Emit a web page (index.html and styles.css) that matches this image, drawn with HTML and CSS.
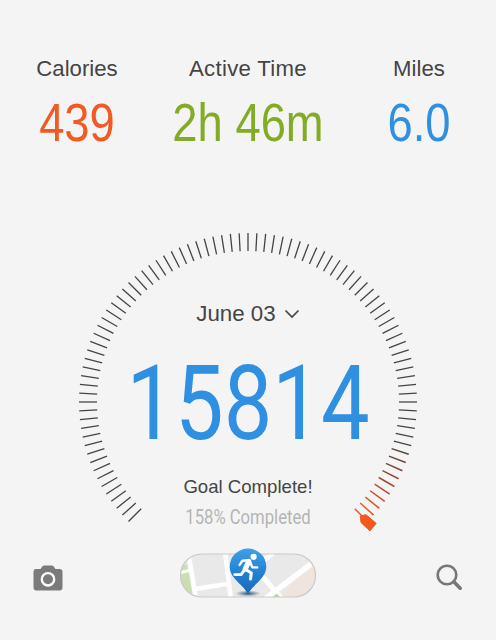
FILE: index.html
```
<!DOCTYPE html>
<html lang="en">
<head>
<meta charset="UTF-8">
<meta name="viewport" content="width=device-width, initial-scale=1.0">
<title>Activity</title>
<link rel="stylesheet" href="styles.css">
</head>
<body>

<div class="stats">
    <div class="stat">
        <div class="stat-label">Calories</div>
        <div class="stat-value orange">439</div>
    </div>
    <div class="stat">
        <div class="stat-label wide">Active Time</div>
        <div class="stat-value green">2h 46m</div>
    </div>
    <div class="stat">
        <div class="stat-label">Miles</div>
        <div class="stat-value blue">6.0</div>
    </div>
</div>

<div class="dial">
    <svg class="dial-ring" viewBox="0 0 350 310" width="350" height="310">
        <g id="ticks"></g>
        <path d="M287.3 293 L293 291.7 L303.2 300.3 L297 307.9 L288 299.6 Z" fill="#f4581f" stroke="#f4581f" stroke-linejoin="round"/>
    </svg>
    <div class="dial-content">
        <div class="date">
            <span>June 03</span>
            <svg width="16" height="10" viewBox="0 0 16 10"><path d="M1.5 1.5 L8 8 L14.5 1.5" fill="none" stroke="#444" stroke-width="1.7"/></svg>
        </div>
        <div class="steps">15814</div>
        <div class="goal">Goal Complete!</div>
        <div class="percent">158% Completed</div>
    </div>
</div>

<div class="toolbar">
    <svg class="camera" width="30" height="26" viewBox="0 0 30 26">
        <path d="M3 4 H7.5 L9.5 1.2 Q10 .5 11 .5 H19 Q20 .5 20.5 1.2 L22.5 4 H26.5 Q29.5 4 29.5 7 V22.5 Q29.5 25.5 26.5 25.5 H3.5 Q.5 25.5 .5 22.5 V7 Q.5 4 3 4 Z" fill="#7b7b7b"/>
        <circle cx="15" cy="14.3" r="6.2" fill="none" stroke="#fff" stroke-width="2.4"/>
    </svg>

    <svg class="map" width="138" height="56" viewBox="0 0 138 56">
        <defs>
            <clipPath id="pill"><rect x="1.5" y="11" width="135" height="43" rx="21.5"/></clipPath>
            <linearGradient id="pinFill" x1="0" y1="0" x2="0" y2="1">
                <stop offset="0" stop-color="#3fa0e8"/>
                <stop offset=".45" stop-color="#2886d8"/>
                <stop offset="1" stop-color="#1769b8"/>
            </linearGradient>
            <radialGradient id="pinShadow">
                <stop offset="0" stop-color="#103f68" stop-opacity=".9"/>
                <stop offset="1" stop-color="#386084" stop-opacity="0"/>
            </radialGradient>
        </defs>
        <g clip-path="url(#pill)">
            <rect width="138" height="56" fill="#e9e9e9"/>
            <path d="M0 24 L8 21 L14 54 H0 Z" fill="#c9dfb2"/>
            <path d="M99 54 L138 18 V56 Z" fill="#f0e5dd"/>
            <g fill="none" stroke="#fff">
                <path d="M9 8 L17 56" stroke-width="4.5"/>
                <path d="M0 30 L12 27" stroke-width="3"/>
                <path d="M16 46 L51 40.5" stroke-width="4.5"/>
                <path d="M46 9 L52 56" stroke-width="4.5"/>
                <path d="M78 27 L103 56" stroke-width="5"/>
                <path d="M86 56 L136 18" stroke-width="5.5"/>
                <path d="M76 24 L94 10" stroke-width="5"/>
            </g>
            <path d="M92 56 L97.5 50.5 L103 56 Z" fill="#b9d79c"/>
        </g>
        <rect x="1.5" y="11" width="135" height="43" rx="21.5" fill="none" stroke="#c9c9c9" stroke-width="1.2"/>
        <ellipse cx="69" cy="50.5" rx="13" ry="3.2" fill="url(#pinShadow)"/>
        <path d="M69 5.5 A18.3 18.3 0 0 1 87.3 23.8 C87.3 35 75 41 70.3 49 Q69 51 67.7 49 C63 41 50.7 35 50.7 23.8 A18.3 18.3 0 0 1 69 5.5 Z" fill="url(#pinFill)"/>
        <g fill="none" stroke="#fff" stroke-linecap="round" stroke-linejoin="round">
            <circle cx="74.6" cy="13.8" r="3.1" fill="#fff" stroke="none"/>
            <path d="M69.6 18.5 L66.3 26" stroke-width="5.2"/>
            <path d="M69.5 17.2 L63.4 17.8 L60.6 21.9" stroke-width="2.4"/>
            <path d="M71.3 19.2 L73.3 24.4 L78.2 24.4" stroke-width="2.4"/>
            <path d="M67.5 27 L72.3 30 L71.5 36" stroke-width="3"/>
            <path d="M65.5 27 L62 31.6 L55.7 31.6" stroke-width="2.9"/>
        </g>
    </svg>

    <svg class="search" width="28" height="28" viewBox="0 0 28 28">
        <circle cx="12" cy="11" r="9.3" fill="none" stroke="#777" stroke-width="2.6"/>
        <path d="M18.8 17.8 L25.2 24.2" stroke="#777" stroke-width="3.6" stroke-linecap="round"/>
    </svg>
</div>

<script>
    const ticks = document.getElementById('ticks');
    const dark = [68, 68, 68];
    const orange = [240, 82, 32];

    // one tick every 3 degrees, fading to orange at the end of the dial
    for (let angle = -135; angle <= 135; angle += 3) {
        const t = Math.max(0, (angle - 105) / 27);
        const color = dark.map((c, i) => Math.round(c + (orange[i] - c) * Math.min(1, t)));
        const line = document.createElementNS('http://www.w3.org/2000/svg', 'line');
        line.setAttribute('x1', 175);
        line.setAttribute('x2', 175);
        line.setAttribute('y1', 10);
        line.setAttribute('y2', 28);
        line.setAttribute('stroke', 'rgb(' + color.join(',') + ')');
        line.setAttribute('stroke-width', t > 0 ? 1.5 : 1.3);
        line.setAttribute('transform', 'rotate(' + angle + ' 175 179)');
        ticks.appendChild(line);
    }
</script>

</body>
</html>
```
FILE: styles.css
```
body {
    font-family: "Liberation Sans", Arial, sans-serif;
    background-color: #f5f4f5;
    color: #444;
    height: 640px;
    margin: 0;
    overflow: hidden;
}
.stats {
    display: grid;
    grid-template-columns: 154px 188px 154px;
    padding-top: 56px;
    height: 167px;
    text-align: center;
    white-space: nowrap;
}
.stat-label {
    font-size: 22.2px;
    line-height: 26px;
}
.wide {
    letter-spacing: 0.3px;
}
.stat-value {
    font-size: 54px;
    line-height: 62px;
    margin-top: 9px;
    transform: scaleX(0.84);
}
.orange {
    color: #f15a22;
}
.green {
    color: #82ac26;
}
.blue {
    color: #2f8fe0;
}
.dial {
    display: grid;
    justify-content: center;
    height: 310px;
}
.dial-ring,
.dial-content {
    grid-area: 1 / 1;
}
.dial-content {
    width: 350px;
    text-align: center;
    padding-top: 78px;
    box-sizing: border-box;
}
.date {
    display: flex;
    justify-content: center;
    align-items: center;
    gap: 8px;
    font-size: 22.3px;
    line-height: 26px;
}
.steps {
    font-family: Roboto, "Liberation Sans", sans-serif;
    font-size: 103px;
    line-height: 120px;
    margin-top: 17px;
    color: #2f8fe0;
    transform: scaleX(0.84);
}
.goal {
    font-size: 18.6px;
    line-height: 22px;
    margin-top: 12px;
}
.percent {
    font-family: Roboto, "Liberation Sans", sans-serif;
    font-size: 19.5px;
    line-height: 22px;
    margin-top: 9px;
    color: #b4b4b4;
    transform: scaleX(0.855);
}
.toolbar {
    display: grid;
    grid-template-columns: 1fr 138px 1fr;
    align-items: center;
    padding: 10px 33px 0;
}
.camera,
.search {
    margin-top: 13px;
}
.search {
    justify-self: end;
}
```
